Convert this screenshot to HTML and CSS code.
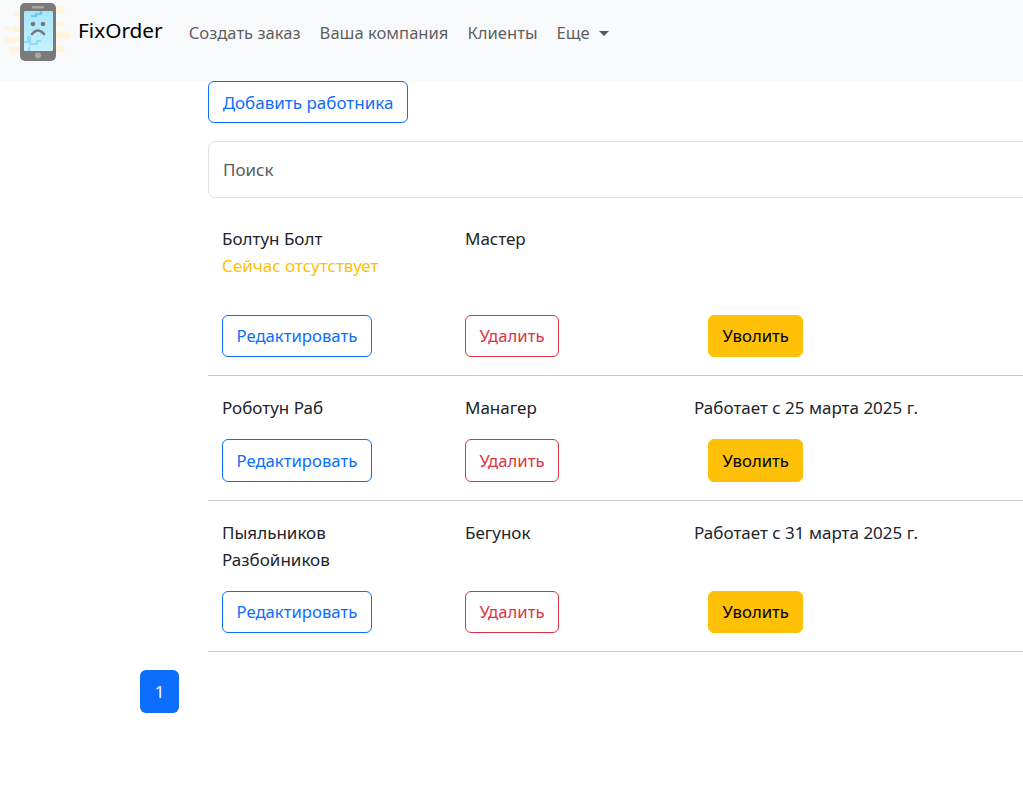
FILE: index.html
```html
<!DOCTYPE html>
<html lang="ru">
<head>
    <meta charset="UTF-8">
    <meta name="viewport" content="width=device-width, initial-scale=1.0">
    <title>FixOrder</title>
    <link rel="stylesheet" href="styles.css">
</head>
<body>
    <nav class="navbar">
        <a class="brand" href="#">
            <svg class="logo" width="74" height="66" viewBox="0 0 74 66">
                <defs>
                    <linearGradient id="screen" x1="0" y1="0" x2="0" y2="1">
                        <stop offset="0" stop-color="#a9e6fb"/>
                        <stop offset="1" stop-color="#c6f1ff"/>
                    </linearGradient>
                </defs>
                <g fill="#fff4dc">
                    <rect x="13" y="12" width="14" height="6" rx="3"/>
                    <rect x="12" y="27" width="15" height="6" rx="3"/>
                    <rect x="4" y="28" width="6" height="4" rx="2"/>
                    <rect x="5" y="38" width="22" height="6" rx="3"/>
                    <rect x="9" y="48" width="18" height="6" rx="3"/>
                    <rect x="50" y="7" width="15" height="8" rx="4"/>
                    <rect x="50" y="23" width="15" height="5" rx="2.5"/>
                    <rect x="50" y="33" width="21" height="7" rx="3.5"/>
                    <rect x="50" y="47" width="15" height="6" rx="3"/>
                </g>
                <rect x="20" y="4" width="36" height="58" rx="5" fill="#7a7a7a"/>
                <rect x="32" y="7" width="12" height="2.500" rx="1.250" fill="#a8a8a8"/>
                <rect x="24" y="12" width="29" height="40" rx="1" fill="url(#screen)"/>
                <path d="M41 12v3h-5v2h-5" fill="none" stroke="#6fc8ec" stroke-width="2.200"/>
                <path d="M24 43h4v-5h2v7h7v-3h4M29 52v-4" fill="none" stroke="#8fdcf7" stroke-width="2"/>
                <circle cx="33" cy="25" r="2.300" fill="#7a7a7a"/>
                <circle cx="43" cy="25" r="2.300" fill="#7a7a7a"/>
                <path d="M32 35q6-7 12 0" fill="none" stroke="#7a7a7a" stroke-width="2.600" stroke-linecap="round"/>
                <circle cx="38" cy="56.500" r="3" fill="#a8a8a8"/>
            </svg>
            <span>FixOrder</span>
        </a>
        <ul class="nav-list">
            <li><a class="nav-link" href="#">Создать заказ</a></li>
            <li><a class="nav-link" href="#">Ваша компания</a></li>
            <li><a class="nav-link" href="#">Клиенты</a></li>
            <li><a class="nav-link dropdown" href="#">Еще</a></li>
        </ul>
    </nav>

    <main class="content">
        <button class="btn btn-blue btn-add">Добавить работника</button>
        <input class="search" type="text" placeholder="Поиск">

        <div class="worker first">
            <div class="col">
                <div>Болтун Болт</div>
                <div class="absent">Сейчас отсутствует</div>
            </div>
            <div class="col">Мастер</div>
            <div class="col since"></div>
            <div class="col"><button class="btn btn-blue">Редактировать</button></div>
            <div class="col"><button class="btn btn-red">Удалить</button></div>
            <div class="col"><button class="btn btn-yellow">Уволить</button></div>
        </div>

        <div class="worker">
            <div class="col">Роботун Раб</div>
            <div class="col">Манагер</div>
            <div class="col since">Работает с 25 марта 2025 г.</div>
            <div class="col"><button class="btn btn-blue">Редактировать</button></div>
            <div class="col"><button class="btn btn-red">Удалить</button></div>
            <div class="col"><button class="btn btn-yellow">Уволить</button></div>
        </div>

        <div class="worker">
            <div class="col">Пыяльников Разбойников</div>
            <div class="col">Бегунок</div>
            <div class="col since">Работает с 31 марта 2025 г.</div>
            <div class="col"><button class="btn btn-blue">Редактировать</button></div>
            <div class="col"><button class="btn btn-red">Удалить</button></div>
            <div class="col"><button class="btn btn-yellow">Уволить</button></div>
        </div>
    </main>

    <div class="pagination">
        <a class="page active" href="#">1</a>
    </div>
</body>
</html>
```

FILE: styles.css
```css
html, body {
    overflow-x: hidden;
}
body {
    margin: 0;
    font-family: "Noto Sans", "Open Sans", sans-serif;
    font-size: 17px;
    line-height: 27px;
    color: #212529;
    background-color: #fff;
}
a {
    text-decoration: none;
}
.navbar {
    display: flex;
    align-items: center;
    height: 64px;
    padding-bottom: 17px;
    background-color: #f8f9fa;
}
.brand {
    display: flex;
    align-items: center;
    margin-left: 4px;
    color: #000;
    font-size: 20.8px;
}
.brand span {
    margin-top: -4px;
}
.logo {
    margin-left: -4px;
    margin-right: 4px;
}
.nav-list {
    display: flex;
    gap: 19px;
    list-style: none;
    margin: 0 0 0 26px;
    padding: 0;
    font-size: 16.6px;
}
.nav-link {
    color: rgba(0, 0, 0, 0.65);
}
.dropdown::after {
    content: "";
    display: inline-block;
    margin-left: 9px;
    vertical-align: 3px;
    border-top: 5px solid;
    border-left: 5px solid transparent;
    border-right: 5px solid transparent;
}
.content {
    width: 1000px;
    margin-left: 208px;
}
.btn {
    box-sizing: border-box;
    height: 42.5px;
    padding: 0 13.5px;
    font: inherit;
    font-size: 16.7px;
    border: 1px solid;
    border-radius: 6px;
    background: transparent;
}
.btn-add {
    display: block;
    height: 42px;
    font-size: 17px;
    width: 200px;
    padding: 0;
}
.btn-blue {
    color: #0d6efd;
    border-color: #0d6efd;
}
.btn-red {
    color: #dc3545;
    border-color: #dc3545;
}
.btn-yellow {
    color: #000;
    background-color: #ffc107;
    border-color: #ffc107;
}
.search {
    display: block;
    box-sizing: border-box;
    width: 100%;
    height: 57px;
    margin: 18px 0 9px;
    padding: 0 14px;
    font: inherit;
    border: 1px solid #dee2e6;
    border-radius: 7px;
}
.search::placeholder {
    color: #595c5f;
}
.worker {
    display: grid;
    grid-template-columns: 243px 243px 243px;
    row-gap: 18px;
    padding: 18px 0;
    border-bottom: 1px solid #c8c8c8;
}
.col {
    padding: 0 14px;
}
.col.since {
    padding: 0;
}
.col .btn {
    display: block;
}
.absent {
    margin-bottom: 17.5px;
    color: #ffc107;
}
.pagination {
    display: flex;
    margin: 18px 0 0 140px;
}
.page {
    width: 39px;
    height: 43px;
    line-height: 43px;
    text-align: center;
    color: #fff;
    background-color: #0d6efd;
    border-radius: 6px;
}
```
